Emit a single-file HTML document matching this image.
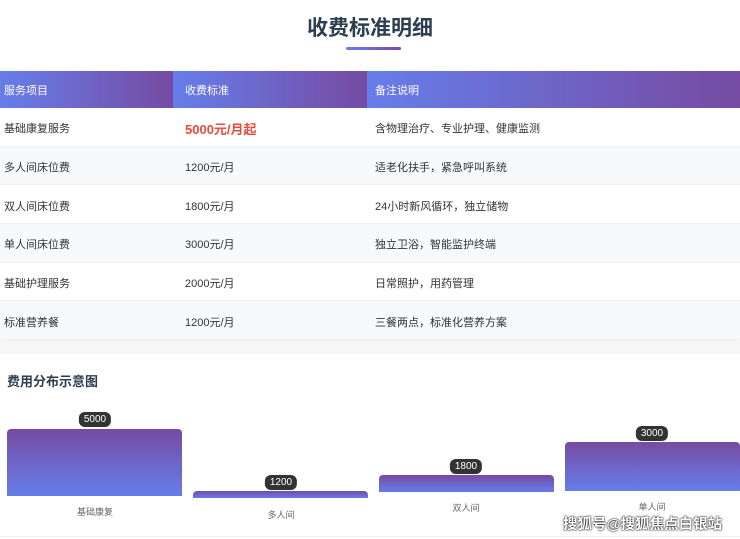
<!DOCTYPE html>
<html><head><meta charset="utf-8"><style>
*{margin:0;padding:0;box-sizing:border-box}
body{width:740px;height:539px;background:#fff;font-family:"Liberation Sans","Noto Sans CJK SC",sans-serif;position:relative;overflow:hidden}
h1{position:absolute;top:12px;left:0;width:740px;text-align:center;font-size:21px;color:#2c3e50;font-weight:bold}
.ul{position:absolute;left:346px;top:47px;width:55px;height:3px;border-radius:2px;background:linear-gradient(90deg,#667eea,#764ba2)}
.tbl{position:absolute;top:71px;left:0;width:740px;box-shadow:0 4px 10px rgba(0,0,0,.07)}
.row{display:flex;height:38.7px;align-items:center;font-size:11px;color:#333;border-bottom:1px solid #eef0f3;padding-top:3px}
.row div{padding-left:4px}
.c1{width:173px}.c2{width:194px;padding-left:12px!important}.c3{flex:1;padding-left:8px!important}
.hd{height:37px;display:flex;color:#fff;font-size:11px}
.hd div{display:flex;align-items:center;padding-left:4px;background:linear-gradient(90deg,#667eea,#764ba2)}
.hd .c2{padding-left:11px}
.red{color:#e74c3c;font-weight:bold;font-size:13px}
.card{position:absolute;top:354px;left:0;width:740px;height:183px;background:#fff;border-bottom:1px solid #eee}
.bg{position:absolute;top:341px;left:0;width:740px;height:13px;background:#f6f6f6}
h2{position:absolute;top:371px;left:7px;font-size:13px;color:#2c3e50;font-weight:bold}
.bar{position:absolute;border-radius:4px 4px 0 0;background:linear-gradient(180deg,#764ba2,#667eea)}
.bd{position:absolute;height:15px;line-height:15px;padding:0 5px;border-radius:6px;background:#333;color:#fff;font-size:10px;transform:translateX(-50%)}
.lb{position:absolute;font-size:9px;color:#666;transform:translateX(-50%)}
.wm{position:absolute;left:563px;top:513px;font-size:14.5px;color:#fff;font-weight:bold;text-shadow:0 0 2px #000,0 0 1px #000}
</style></head><body>
<h1>收费标准明细</h1><div class="ul"></div>
<div class="tbl">
<div class="hd"><div class="c1">服务项目</div><div class="c2">收费标准</div><div class="c3">备注说明</div></div>
<div style="background:#fff">
<div class="row" style="background:#fff"><div class="c1">基础康复服务</div><div class="c2 red">5000元/月起</div><div class="c3">含物理治疗、专业护理、健康监测</div></div>
<div class="row" style="background:#f8f9fb"><div class="c1">多人间床位费</div><div class="c2">1200元/月</div><div class="c3">适老化扶手，紧急呼叫系统</div></div>
<div class="row" style="background:#fff"><div class="c1">双人间床位费</div><div class="c2">1800元/月</div><div class="c3">24小时新风循环，独立储物</div></div>
<div class="row" style="background:#f8f9fb"><div class="c1">单人间床位费</div><div class="c2">3000元/月</div><div class="c3">独立卫浴，智能监护终端</div></div>
<div class="row" style="background:#fff"><div class="c1">基础护理服务</div><div class="c2">2000元/月</div><div class="c3">日常照护，用药管理</div></div>
<div class="row" style="background:#f8f9fb"><div class="c1">标准营养餐</div><div class="c2">1200元/月</div><div class="c3">三餐两点，标准化营养方案</div></div>
</div></div>
<div class="bg"></div>
<div class="card"></div>
<h2>费用分布示意图</h2>
<div class="bar" style="left:7px;top:429px;width:175px;height:67px"></div>
<div class="bd" style="left:95px;top:412px">5000</div>
<div class="lb" style="left:95px;top:505px">基础康复</div>
<div class="bar" style="left:193px;top:491px;width:175px;height:7px"></div>
<div class="bd" style="left:281px;top:475px">1200</div>
<div class="lb" style="left:281px;top:508px">多人间</div>
<div class="bar" style="left:379px;top:475px;width:175px;height:17px"></div>
<div class="bd" style="left:466px;top:459px">1800</div>
<div class="lb" style="left:466px;top:501px">双人间</div>
<div class="bar" style="left:565px;top:442px;width:175px;height:49px"></div>
<div class="bd" style="left:652px;top:426px">3000</div>
<div class="lb" style="left:652px;top:500px">单人间</div>
<div class="wm">搜狐号@搜狐焦点白银站</div>
</body></html>
